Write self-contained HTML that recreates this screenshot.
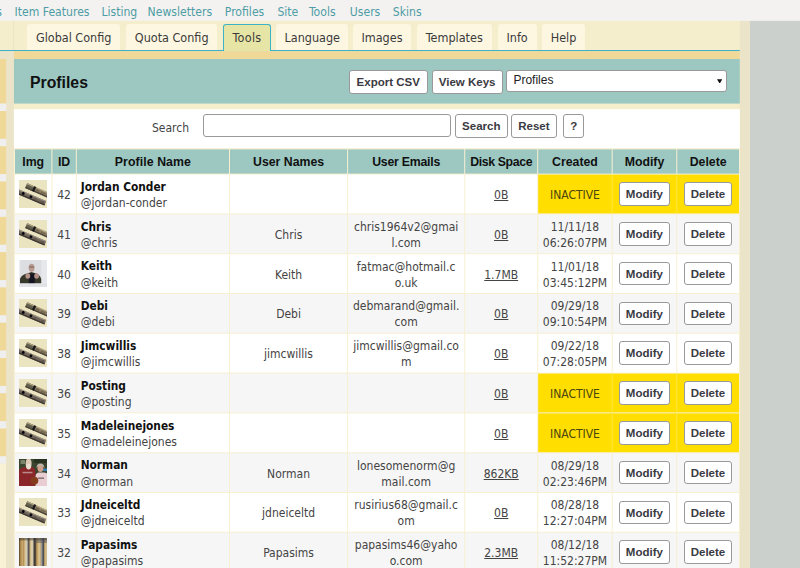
<!DOCTYPE html>
<html lang="en"><head><meta charset="utf-8"><title>Profiles</title>
<style>
html,body{margin:0;padding:0}
body{width:800px;height:568px;overflow:hidden;position:relative;background:#f5eecc;
 font-family:"DejaVu Sans Condensed","Liberation Sans",sans-serif;font-size:12px;color:#444;line-height:16px}
div,span,a{position:absolute;box-sizing:border-box;white-space:nowrap}
svg{position:absolute;display:block;left:0;top:0}
.nav{top:2.5px;font-size:12.1px;color:#4e9ca6;line-height:18px}
.tab{top:24px;height:26px;background:#fdf7e2;border-radius:3px 3px 0 0;font-size:12.5px;line-height:28.4px;text-align:center;color:#3a3a3a}
.tab.on{background:#e6e5a6;border:1px solid #3db1c5;border-bottom:none;height:27.2px;line-height:26.4px}
.title{left:30px;top:72.5px;font-family:"Liberation Sans",sans-serif;font-weight:bold;font-size:15.8px;color:#111;line-height:20px}
.btn{background:#fff;border:1px solid #999;border-radius:3px;font-family:"Liberation Sans",sans-serif;font-weight:bold;font-size:11.5px;color:#3a3a42;text-align:center}
.sel{background:#fff;border:1px solid #999;border-radius:3px;font-family:"Liberation Sans",sans-serif;font-size:12px;color:#222}
.th{font-family:"Liberation Sans",sans-serif;font-weight:bold;font-size:12.3px;color:#111;text-align:center;line-height:26.2px}
.td{display:flex;flex-direction:column;justify-content:center;align-items:center;text-align:center}
.td.l{align-items:flex-start;padding-left:3.9px}
.nm{position:relative;top:.9px;font-weight:bold;font-size:11.8px;color:#111;line-height:16px}
.ln{position:relative;top:1px;line-height:16px}
.lk{position:relative;top:1px;text-decoration:underline;color:#444}
</style></head>
<body>
<svg width="800" height="568" viewBox="0 0 800 568">
<rect x="0" y="0" width="800" height="568" fill="#f5eecc"/>
<rect x="0" y="0" width="800" height="20.9" fill="#f3f2f0"/>
<rect x="13.2" y="21" width="0.9" height="29" fill="#ebe3bf"/>
<rect x="739.8" y="20.9" width="10.2" height="547.1" fill="#ece4c8"/>
<rect x="750" y="20.9" width="50" height="547.1" fill="#cbd0cd"/>
<rect x="0" y="50" width="739.8" height="1.2" fill="#3db1c5"/>
<rect x="0" y="51.2" width="13.9" height="516.8" fill="#ece4c8"/>
<rect x="0" y="59" width="6.1" height="44.6" fill="#f0d899"/>
<rect x="0" y="103.6" width="6.1" height="7.4" fill="#efeff0"/>
<rect x="0" y="111.0" width="6.1" height="27.89" fill="#f0d899"/>
<rect x="0" y="138.89" width="6.1" height="7.4" fill="#efeff0"/>
<rect x="0" y="146.29" width="6.1" height="27.89" fill="#f0d899"/>
<rect x="0" y="174.18" width="6.1" height="7.4" fill="#efeff0"/>
<rect x="0" y="181.58" width="6.1" height="27.89" fill="#f0d899"/>
<rect x="0" y="209.47" width="6.1" height="7.4" fill="#efeff0"/>
<rect x="0" y="216.87" width="6.1" height="27.89" fill="#f0d899"/>
<rect x="0" y="244.76" width="6.1" height="7.4" fill="#efeff0"/>
<rect x="0" y="252.16" width="6.1" height="27.89" fill="#f0d899"/>
<rect x="0" y="280.05" width="6.1" height="7.4" fill="#efeff0"/>
<rect x="0" y="287.45" width="6.1" height="27.89" fill="#f0d899"/>
<rect x="0" y="315.34" width="6.1" height="7.4" fill="#efeff0"/>
<rect x="0" y="322.74" width="6.1" height="27.89" fill="#f0d899"/>
<rect x="0" y="350.63" width="6.1" height="7.4" fill="#efeff0"/>
<rect x="0" y="358.03" width="6.1" height="27.89" fill="#f0d899"/>
<rect x="0" y="385.92" width="6.1" height="7.4" fill="#efeff0"/>
<rect x="0" y="393.32" width="6.1" height="27.89" fill="#f0d899"/>
<rect x="0" y="421.21" width="6.1" height="7.4" fill="#efeff0"/>
<rect x="0" y="428.61" width="6.1" height="27.89" fill="#f0d899"/>
<rect x="0" y="456.3" width="6.1" height="7.5" fill="#efeff0"/>
<rect x="0" y="463.8" width="6.1" height="104.2" fill="#f9f2d4"/>
<rect x="13.9" y="51.2" width="725.9" height="7.8" fill="#f0d899"/>
<rect x="13.9" y="59" width="725.9" height="44.6" fill="#9cc8c1"/>
<rect x="13.9" y="109.2" width="725.9" height="39.1" fill="#fff"/>
<rect x="13.9" y="148.3" width="725.9" height="419.7" fill="#f8f0d2"/>
<rect x="15.0" y="149.4" width="36.4" height="24.2" fill="#9cc8c1"/>
<rect x="52.4" y="149.4" width="23.4" height="24.2" fill="#9cc8c1"/>
<rect x="76.8" y="149.4" width="152.2" height="24.2" fill="#9cc8c1"/>
<rect x="230.0" y="149.4" width="117.1" height="24.2" fill="#9cc8c1"/>
<rect x="348.1" y="149.4" width="116.1" height="24.2" fill="#9cc8c1"/>
<rect x="465.2" y="149.4" width="72.0" height="24.2" fill="#9cc8c1"/>
<rect x="538.2" y="149.4" width="73.5" height="24.2" fill="#9cc8c1"/>
<rect x="612.7" y="149.4" width="63.6" height="24.2" fill="#9cc8c1"/>
<rect x="677.3" y="149.4" width="61.7" height="24.2" fill="#9cc8c1"/>
<rect x="15.0" y="174.6" width="36.4" height="38.8" fill="#fff"/>
<rect x="52.4" y="174.6" width="23.4" height="38.8" fill="#fff"/>
<rect x="76.8" y="174.6" width="152.2" height="38.8" fill="#fff"/>
<rect x="230.0" y="174.6" width="117.1" height="38.8" fill="#fff"/>
<rect x="348.1" y="174.6" width="116.1" height="38.8" fill="#fff"/>
<rect x="465.2" y="174.6" width="72.0" height="38.8" fill="#fff"/>
<rect x="538.2" y="174.6" width="200.8" height="38.8" fill="#ffde00"/>
<rect x="611.75" y="174.6" width="0.9" height="38.8" fill="#ffe646"/>
<rect x="676.35" y="174.6" width="0.9" height="38.8" fill="#ffe646"/>
<rect x="15.0" y="214.4" width="36.4" height="38.8" fill="#f6f6f6"/>
<rect x="52.4" y="214.4" width="23.4" height="38.8" fill="#f6f6f6"/>
<rect x="76.8" y="214.4" width="152.2" height="38.8" fill="#f6f6f6"/>
<rect x="230.0" y="214.4" width="117.1" height="38.8" fill="#f6f6f6"/>
<rect x="348.1" y="214.4" width="116.1" height="38.8" fill="#f6f6f6"/>
<rect x="465.2" y="214.4" width="72.0" height="38.8" fill="#f6f6f6"/>
<rect x="538.2" y="214.4" width="73.5" height="38.8" fill="#f6f6f6"/>
<rect x="612.7" y="214.4" width="63.6" height="38.8" fill="#f6f6f6"/>
<rect x="677.3" y="214.4" width="61.7" height="38.8" fill="#f6f6f6"/>
<rect x="15.0" y="254.2" width="36.4" height="38.8" fill="#fff"/>
<rect x="52.4" y="254.2" width="23.4" height="38.8" fill="#fff"/>
<rect x="76.8" y="254.2" width="152.2" height="38.8" fill="#fff"/>
<rect x="230.0" y="254.2" width="117.1" height="38.8" fill="#fff"/>
<rect x="348.1" y="254.2" width="116.1" height="38.8" fill="#fff"/>
<rect x="465.2" y="254.2" width="72.0" height="38.8" fill="#fff"/>
<rect x="538.2" y="254.2" width="73.5" height="38.8" fill="#fff"/>
<rect x="612.7" y="254.2" width="63.6" height="38.8" fill="#fff"/>
<rect x="677.3" y="254.2" width="61.7" height="38.8" fill="#fff"/>
<rect x="15.0" y="294.0" width="36.4" height="38.8" fill="#f6f6f6"/>
<rect x="52.4" y="294.0" width="23.4" height="38.8" fill="#f6f6f6"/>
<rect x="76.8" y="294.0" width="152.2" height="38.8" fill="#f6f6f6"/>
<rect x="230.0" y="294.0" width="117.1" height="38.8" fill="#f6f6f6"/>
<rect x="348.1" y="294.0" width="116.1" height="38.8" fill="#f6f6f6"/>
<rect x="465.2" y="294.0" width="72.0" height="38.8" fill="#f6f6f6"/>
<rect x="538.2" y="294.0" width="73.5" height="38.8" fill="#f6f6f6"/>
<rect x="612.7" y="294.0" width="63.6" height="38.8" fill="#f6f6f6"/>
<rect x="677.3" y="294.0" width="61.7" height="38.8" fill="#f6f6f6"/>
<rect x="15.0" y="333.8" width="36.4" height="38.8" fill="#fff"/>
<rect x="52.4" y="333.8" width="23.4" height="38.8" fill="#fff"/>
<rect x="76.8" y="333.8" width="152.2" height="38.8" fill="#fff"/>
<rect x="230.0" y="333.8" width="117.1" height="38.8" fill="#fff"/>
<rect x="348.1" y="333.8" width="116.1" height="38.8" fill="#fff"/>
<rect x="465.2" y="333.8" width="72.0" height="38.8" fill="#fff"/>
<rect x="538.2" y="333.8" width="73.5" height="38.8" fill="#fff"/>
<rect x="612.7" y="333.8" width="63.6" height="38.8" fill="#fff"/>
<rect x="677.3" y="333.8" width="61.7" height="38.8" fill="#fff"/>
<rect x="15.0" y="373.6" width="36.4" height="38.8" fill="#f6f6f6"/>
<rect x="52.4" y="373.6" width="23.4" height="38.8" fill="#f6f6f6"/>
<rect x="76.8" y="373.6" width="152.2" height="38.8" fill="#f6f6f6"/>
<rect x="230.0" y="373.6" width="117.1" height="38.8" fill="#f6f6f6"/>
<rect x="348.1" y="373.6" width="116.1" height="38.8" fill="#f6f6f6"/>
<rect x="465.2" y="373.6" width="72.0" height="38.8" fill="#f6f6f6"/>
<rect x="538.2" y="373.6" width="200.8" height="38.8" fill="#ffde00"/>
<rect x="611.75" y="373.6" width="0.9" height="38.8" fill="#ffe646"/>
<rect x="676.35" y="373.6" width="0.9" height="38.8" fill="#ffe646"/>
<rect x="15.0" y="413.4" width="36.4" height="38.8" fill="#fff"/>
<rect x="52.4" y="413.4" width="23.4" height="38.8" fill="#fff"/>
<rect x="76.8" y="413.4" width="152.2" height="38.8" fill="#fff"/>
<rect x="230.0" y="413.4" width="117.1" height="38.8" fill="#fff"/>
<rect x="348.1" y="413.4" width="116.1" height="38.8" fill="#fff"/>
<rect x="465.2" y="413.4" width="72.0" height="38.8" fill="#fff"/>
<rect x="538.2" y="413.4" width="200.8" height="38.8" fill="#ffde00"/>
<rect x="611.75" y="413.4" width="0.9" height="38.8" fill="#ffe646"/>
<rect x="676.35" y="413.4" width="0.9" height="38.8" fill="#ffe646"/>
<rect x="15.0" y="453.2" width="36.4" height="38.8" fill="#f6f6f6"/>
<rect x="52.4" y="453.2" width="23.4" height="38.8" fill="#f6f6f6"/>
<rect x="76.8" y="453.2" width="152.2" height="38.8" fill="#f6f6f6"/>
<rect x="230.0" y="453.2" width="117.1" height="38.8" fill="#f6f6f6"/>
<rect x="348.1" y="453.2" width="116.1" height="38.8" fill="#f6f6f6"/>
<rect x="465.2" y="453.2" width="72.0" height="38.8" fill="#f6f6f6"/>
<rect x="538.2" y="453.2" width="73.5" height="38.8" fill="#f6f6f6"/>
<rect x="612.7" y="453.2" width="63.6" height="38.8" fill="#f6f6f6"/>
<rect x="677.3" y="453.2" width="61.7" height="38.8" fill="#f6f6f6"/>
<rect x="15.0" y="493.0" width="36.4" height="38.8" fill="#fff"/>
<rect x="52.4" y="493.0" width="23.4" height="38.8" fill="#fff"/>
<rect x="76.8" y="493.0" width="152.2" height="38.8" fill="#fff"/>
<rect x="230.0" y="493.0" width="117.1" height="38.8" fill="#fff"/>
<rect x="348.1" y="493.0" width="116.1" height="38.8" fill="#fff"/>
<rect x="465.2" y="493.0" width="72.0" height="38.8" fill="#fff"/>
<rect x="538.2" y="493.0" width="73.5" height="38.8" fill="#fff"/>
<rect x="612.7" y="493.0" width="63.6" height="38.8" fill="#fff"/>
<rect x="677.3" y="493.0" width="61.7" height="38.8" fill="#fff"/>
<rect x="15.0" y="532.8" width="36.4" height="38.8" fill="#f6f6f6"/>
<rect x="52.4" y="532.8" width="23.4" height="38.8" fill="#f6f6f6"/>
<rect x="76.8" y="532.8" width="152.2" height="38.8" fill="#f6f6f6"/>
<rect x="230.0" y="532.8" width="117.1" height="38.8" fill="#f6f6f6"/>
<rect x="348.1" y="532.8" width="116.1" height="38.8" fill="#f6f6f6"/>
<rect x="465.2" y="532.8" width="72.0" height="38.8" fill="#f6f6f6"/>
<rect x="538.2" y="532.8" width="73.5" height="38.8" fill="#f6f6f6"/>
<rect x="612.7" y="532.8" width="63.6" height="38.8" fill="#f6f6f6"/>
<rect x="677.3" y="532.8" width="61.7" height="38.8" fill="#f6f6f6"/>
</svg>
<span class="nav" style="left:-3.8px">s</span>
<span class="nav" style="left:14.6px">Item Features</span>
<span class="nav" style="left:101.4px">Listing</span>
<span class="nav" style="left:147.6px">Newsletters</span>
<span class="nav" style="left:224.8px">Profiles</span>
<span class="nav" style="left:277.4px">Site</span>
<span class="nav" style="left:309px">Tools</span>
<span class="nav" style="left:349.8px">Users</span>
<span class="nav" style="left:392.8px">Skins</span>
<div class="tab" style="left:27px;width:93.4px">Global Config</div>
<div class="tab" style="left:126px;width:91.4px">Quota Config</div>
<div class="tab on" style="left:223px;width:48px;letter-spacing:.3px">Tools</div>
<div class="tab" style="left:276.4px;width:71.8px">Language</div>
<div class="tab" style="left:353px;width:58px">Images</div>
<div class="tab" style="left:416.6px;width:75.4px">Templates</div>
<div class="tab" style="left:497.6px;width:39.0px">Info</div>
<div class="tab" style="left:542px;width:43px">Help</div>
<span class="title">Profiles</span>
<div class="btn" style="left:349px;top:70px;width:78.5px;height:24.3px;line-height:22.6px">Export CSV</div>
<div class="btn" style="left:431.5px;top:70px;width:71.2px;height:24.3px;line-height:22.6px">View Keys</div>
<div class="sel" style="left:506.4px;top:70px;width:220.8px;height:21.8px;line-height:19.6px;padding-left:6px">Profiles<svg style="left:209.6px;top:7.6px" width="5.4" height="4.8" viewBox="0 0 6 5"><path d="M0 0h6L3 5z" fill="#111"/></svg></div>
<span style="left:152px;top:119.8px;line-height:16px">Search</span>
<div class="sel" style="left:203px;top:114px;width:248.2px;height:22.8px"></div>
<div class="btn" style="left:455px;top:114px;width:52.5px;height:23.5px;line-height:22px">Search</div>
<div class="btn" style="left:511.2px;top:114px;width:45.5px;height:23.5px;line-height:22px">Reset</div>
<div class="btn" style="left:563.2px;top:114px;width:21px;height:23.5px;line-height:22px">?</div>
<div class="th" style="left:15.0px;top:149.4px;width:36.4px;height:24.2px">Img</div>
<div class="th" style="left:52.4px;top:149.4px;width:23.4px;height:24.2px">ID</div>
<div class="th" style="left:76.8px;top:149.4px;width:152.2px;height:24.2px;letter-spacing:0.08px">Profile Name</div>
<div class="th" style="left:230.0px;top:149.4px;width:117.1px;height:24.2px">User Names</div>
<div class="th" style="left:348.1px;top:149.4px;width:116.1px;height:24.2px;letter-spacing:-0.23px">User Emails</div>
<div class="th" style="left:465.2px;top:149.4px;width:72.0px;height:24.2px;letter-spacing:-0.35px">Disk Space</div>
<div class="th" style="left:538.2px;top:149.4px;width:73.5px;height:24.2px">Created</div>
<div class="th" style="left:612.7px;top:149.4px;width:63.6px;height:24.2px">Modify</div>
<div class="th" style="left:677.3px;top:149.4px;width:61.7px;height:24.2px">Delete</div>
<div style="left:19px;top:180px;width:28px;height:28px"><svg width="28" height="28" viewBox="0 0 28 28"><rect width="28" height="28" fill="#ebe4c0"/><g transform="rotate(23.8 28 14.75)"><rect x="5.3" y="12.25" width="25" height="5" fill="#8b7d63"/><rect x="5.3" y="12.25" width="7.6" height="5" fill="#63624e"/><rect x="5.3" y="12.25" width="25" height="1" fill="#b9ab88"/><rect x="5.3" y="15.9" width="25" height="1.35" fill="#4a4439"/><rect x="12.7" y="12.1" width="2.3" height="5.2" fill="#15151c"/><rect x="16" y="13.8" width="3.4" height="1.6" fill="#6d604a"/><rect x="21.5" y="14" width="4.5" height="1.5" fill="#75684f"/></g><g transform="rotate(23 0 12.15)"><rect x="-3" y="9.75" width="31.6" height="4.8" fill="#70665a"/><rect x="-3" y="9.75" width="31.6" height="1" fill="#9d9282"/><rect x="-3" y="13.2" width="31.6" height="1.35" fill="#3c3731"/><circle cx="4.4" cy="11.7" r="1.45" fill="#08080e"/><circle cx="12.8" cy="11.7" r="1.45" fill="#08080e"/><rect x="16.5" y="11" width="2" height="2" fill="#5d564c"/><rect x="20.5" y="11.2" width="2" height="1.8" fill="#6a6256"/><rect x="24.5" y="11" width="2.4" height="2" fill="#5d564c"/></g></svg></div>
<div class="td " style="left:52.4px;top:174.6px;width:23.4px;height:38.8px"><span class="ln">42</span></div>
<div class="td l" style="left:76.8px;top:174.6px;width:152.2px;height:38.8px"><span class="nm">Jordan Conder</span><span class="ln">@jordan-conder</span></div>
<div class="td " style="left:465.2px;top:174.6px;width:72.0px;height:38.8px"><a class="lk">0B</a></div>
<div class="td " style="left:538.2px;top:174.6px;width:73.5px;height:38.8px"><span class="ln" style="color:#4b4510">INACTIVE</span></div>
<div class="btn" style="left:618.8px;top:182.2px;width:51.2px;height:23.6px;line-height:22px">Modify</div>
<div class="btn" style="left:683.7px;top:182.2px;width:48.6px;height:23.6px;line-height:22px">Delete</div>
<div style="left:19px;top:220px;width:28px;height:28px"><svg width="28" height="28" viewBox="0 0 28 28"><rect width="28" height="28" fill="#ebe4c0"/><g transform="rotate(23.8 28 14.75)"><rect x="5.3" y="12.25" width="25" height="5" fill="#8b7d63"/><rect x="5.3" y="12.25" width="7.6" height="5" fill="#63624e"/><rect x="5.3" y="12.25" width="25" height="1" fill="#b9ab88"/><rect x="5.3" y="15.9" width="25" height="1.35" fill="#4a4439"/><rect x="12.7" y="12.1" width="2.3" height="5.2" fill="#15151c"/><rect x="16" y="13.8" width="3.4" height="1.6" fill="#6d604a"/><rect x="21.5" y="14" width="4.5" height="1.5" fill="#75684f"/></g><g transform="rotate(23 0 12.15)"><rect x="-3" y="9.75" width="31.6" height="4.8" fill="#70665a"/><rect x="-3" y="9.75" width="31.6" height="1" fill="#9d9282"/><rect x="-3" y="13.2" width="31.6" height="1.35" fill="#3c3731"/><circle cx="4.4" cy="11.7" r="1.45" fill="#08080e"/><circle cx="12.8" cy="11.7" r="1.45" fill="#08080e"/><rect x="16.5" y="11" width="2" height="2" fill="#5d564c"/><rect x="20.5" y="11.2" width="2" height="1.8" fill="#6a6256"/><rect x="24.5" y="11" width="2.4" height="2" fill="#5d564c"/></g></svg></div>
<div class="td " style="left:52.4px;top:214.4px;width:23.4px;height:38.8px"><span class="ln">41</span></div>
<div class="td l" style="left:76.8px;top:214.4px;width:152.2px;height:38.8px"><span class="nm">Chris</span><span class="ln">@chris</span></div>
<div class="td " style="left:230.0px;top:214.4px;width:117.1px;height:38.8px"><span class="ln">Chris</span></div>
<div class="td " style="left:348.1px;top:214.4px;width:116.1px;height:38.8px"><span class="ln">chris1964v2@gmai</span><span class="ln">l.com</span></div>
<div class="td " style="left:465.2px;top:214.4px;width:72.0px;height:38.8px"><a class="lk">0B</a></div>
<div class="td " style="left:538.2px;top:214.4px;width:73.5px;height:38.8px"><span class="ln">11/11/18</span><span class="ln">06:26:07PM</span></div>
<div class="btn" style="left:618.8px;top:222.0px;width:51.2px;height:23.6px;line-height:22px">Modify</div>
<div class="btn" style="left:683.7px;top:222.0px;width:48.6px;height:23.6px;line-height:22px">Delete</div>
<div style="left:19px;top:260px;width:28px;height:27px"><svg width="28" height="27" viewBox="0 0 28 27"><defs><filter id="bm" x="0" y="0" width="1" height="1"><feGaussianBlur stdDeviation=".55"/></filter></defs><rect width="28" height="27" fill="#dfe1e4"/><g filter="url(#bm)"><rect x="-2" y="-2" width="32" height="31" fill="#dcdee1"/><rect x="22.4" y="-2" width="8" height="31" fill="#e6e8eb"/><rect x="-2" y="-2" width="3.2" height="31" fill="#eceef0"/><ellipse cx="12.6" cy="7.8" rx="3" ry="4.1" fill="#bb9c90"/><rect x="10.4" y="6.5" width="4.4" height="1" fill="#6f5f5c"/><path d="M1 23.4V19Q2.5 14.5 8 13.4L12.5 12 17 13.4Q21 14.5 22.2 19v4.4z" fill="#39392c"/><path d="M9.8 13.4h6v10h-6z" fill="#191920"/><ellipse cx="8.8" cy="16" rx="2.4" ry="2.7" fill="#b5928a"/><ellipse cx="17.6" cy="16" rx="2.4" ry="2.7" fill="#b5928a"/><rect x="-2" y="23.4" width="32" height="6" fill="#e1e3e7"/></g></svg></div>
<div class="td " style="left:52.4px;top:254.2px;width:23.4px;height:38.8px"><span class="ln">40</span></div>
<div class="td l" style="left:76.8px;top:254.2px;width:152.2px;height:38.8px"><span class="nm">Keith</span><span class="ln">@keith</span></div>
<div class="td " style="left:230.0px;top:254.2px;width:117.1px;height:38.8px"><span class="ln">Keith</span></div>
<div class="td " style="left:348.1px;top:254.2px;width:116.1px;height:38.8px"><span class="ln">fatmac@hotmail.c</span><span class="ln">o.uk</span></div>
<div class="td " style="left:465.2px;top:254.2px;width:72.0px;height:38.8px"><a class="lk">1.7MB</a></div>
<div class="td " style="left:538.2px;top:254.2px;width:73.5px;height:38.8px"><span class="ln">11/01/18</span><span class="ln">03:45:12PM</span></div>
<div class="btn" style="left:618.8px;top:261.8px;width:51.2px;height:23.6px;line-height:22px">Modify</div>
<div class="btn" style="left:683.7px;top:261.8px;width:48.6px;height:23.6px;line-height:22px">Delete</div>
<div style="left:19px;top:299px;width:28px;height:28px"><svg width="28" height="28" viewBox="0 0 28 28"><rect width="28" height="28" fill="#ebe4c0"/><g transform="rotate(23.8 28 14.75)"><rect x="5.3" y="12.25" width="25" height="5" fill="#8b7d63"/><rect x="5.3" y="12.25" width="7.6" height="5" fill="#63624e"/><rect x="5.3" y="12.25" width="25" height="1" fill="#b9ab88"/><rect x="5.3" y="15.9" width="25" height="1.35" fill="#4a4439"/><rect x="12.7" y="12.1" width="2.3" height="5.2" fill="#15151c"/><rect x="16" y="13.8" width="3.4" height="1.6" fill="#6d604a"/><rect x="21.5" y="14" width="4.5" height="1.5" fill="#75684f"/></g><g transform="rotate(23 0 12.15)"><rect x="-3" y="9.75" width="31.6" height="4.8" fill="#70665a"/><rect x="-3" y="9.75" width="31.6" height="1" fill="#9d9282"/><rect x="-3" y="13.2" width="31.6" height="1.35" fill="#3c3731"/><circle cx="4.4" cy="11.7" r="1.45" fill="#08080e"/><circle cx="12.8" cy="11.7" r="1.45" fill="#08080e"/><rect x="16.5" y="11" width="2" height="2" fill="#5d564c"/><rect x="20.5" y="11.2" width="2" height="1.8" fill="#6a6256"/><rect x="24.5" y="11" width="2.4" height="2" fill="#5d564c"/></g></svg></div>
<div class="td " style="left:52.4px;top:294.0px;width:23.4px;height:38.8px"><span class="ln">39</span></div>
<div class="td l" style="left:76.8px;top:294.0px;width:152.2px;height:38.8px"><span class="nm">Debi</span><span class="ln">@debi</span></div>
<div class="td " style="left:230.0px;top:294.0px;width:117.1px;height:38.8px"><span class="ln">Debi</span></div>
<div class="td " style="left:348.1px;top:294.0px;width:116.1px;height:38.8px"><span class="ln">debmarand@gmail.</span><span class="ln">com</span></div>
<div class="td " style="left:465.2px;top:294.0px;width:72.0px;height:38.8px"><a class="lk">0B</a></div>
<div class="td " style="left:538.2px;top:294.0px;width:73.5px;height:38.8px"><span class="ln">09/29/18</span><span class="ln">09:10:54PM</span></div>
<div class="btn" style="left:618.8px;top:301.6px;width:51.2px;height:23.6px;line-height:22px">Modify</div>
<div class="btn" style="left:683.7px;top:301.6px;width:48.6px;height:23.6px;line-height:22px">Delete</div>
<div style="left:19px;top:339px;width:28px;height:28px"><svg width="28" height="28" viewBox="0 0 28 28"><rect width="28" height="28" fill="#ebe4c0"/><g transform="rotate(23.8 28 14.75)"><rect x="5.3" y="12.25" width="25" height="5" fill="#8b7d63"/><rect x="5.3" y="12.25" width="7.6" height="5" fill="#63624e"/><rect x="5.3" y="12.25" width="25" height="1" fill="#b9ab88"/><rect x="5.3" y="15.9" width="25" height="1.35" fill="#4a4439"/><rect x="12.7" y="12.1" width="2.3" height="5.2" fill="#15151c"/><rect x="16" y="13.8" width="3.4" height="1.6" fill="#6d604a"/><rect x="21.5" y="14" width="4.5" height="1.5" fill="#75684f"/></g><g transform="rotate(23 0 12.15)"><rect x="-3" y="9.75" width="31.6" height="4.8" fill="#70665a"/><rect x="-3" y="9.75" width="31.6" height="1" fill="#9d9282"/><rect x="-3" y="13.2" width="31.6" height="1.35" fill="#3c3731"/><circle cx="4.4" cy="11.7" r="1.45" fill="#08080e"/><circle cx="12.8" cy="11.7" r="1.45" fill="#08080e"/><rect x="16.5" y="11" width="2" height="2" fill="#5d564c"/><rect x="20.5" y="11.2" width="2" height="1.8" fill="#6a6256"/><rect x="24.5" y="11" width="2.4" height="2" fill="#5d564c"/></g></svg></div>
<div class="td " style="left:52.4px;top:333.8px;width:23.4px;height:38.8px"><span class="ln">38</span></div>
<div class="td l" style="left:76.8px;top:333.8px;width:152.2px;height:38.8px"><span class="nm">Jimcwillis</span><span class="ln">@jimcwillis</span></div>
<div class="td " style="left:230.0px;top:333.8px;width:117.1px;height:38.8px"><span class="ln">jimcwillis</span></div>
<div class="td " style="left:348.1px;top:333.8px;width:116.1px;height:38.8px"><span class="ln">jimcwillis@gmail.co</span><span class="ln">m</span></div>
<div class="td " style="left:465.2px;top:333.8px;width:72.0px;height:38.8px"><a class="lk">0B</a></div>
<div class="td " style="left:538.2px;top:333.8px;width:73.5px;height:38.8px"><span class="ln">09/22/18</span><span class="ln">07:28:05PM</span></div>
<div class="btn" style="left:618.8px;top:341.4px;width:51.2px;height:23.6px;line-height:22px">Modify</div>
<div class="btn" style="left:683.7px;top:341.4px;width:48.6px;height:23.6px;line-height:22px">Delete</div>
<div style="left:19px;top:379px;width:28px;height:28px"><svg width="28" height="28" viewBox="0 0 28 28"><rect width="28" height="28" fill="#ebe4c0"/><g transform="rotate(23.8 28 14.75)"><rect x="5.3" y="12.25" width="25" height="5" fill="#8b7d63"/><rect x="5.3" y="12.25" width="7.6" height="5" fill="#63624e"/><rect x="5.3" y="12.25" width="25" height="1" fill="#b9ab88"/><rect x="5.3" y="15.9" width="25" height="1.35" fill="#4a4439"/><rect x="12.7" y="12.1" width="2.3" height="5.2" fill="#15151c"/><rect x="16" y="13.8" width="3.4" height="1.6" fill="#6d604a"/><rect x="21.5" y="14" width="4.5" height="1.5" fill="#75684f"/></g><g transform="rotate(23 0 12.15)"><rect x="-3" y="9.75" width="31.6" height="4.8" fill="#70665a"/><rect x="-3" y="9.75" width="31.6" height="1" fill="#9d9282"/><rect x="-3" y="13.2" width="31.6" height="1.35" fill="#3c3731"/><circle cx="4.4" cy="11.7" r="1.45" fill="#08080e"/><circle cx="12.8" cy="11.7" r="1.45" fill="#08080e"/><rect x="16.5" y="11" width="2" height="2" fill="#5d564c"/><rect x="20.5" y="11.2" width="2" height="1.8" fill="#6a6256"/><rect x="24.5" y="11" width="2.4" height="2" fill="#5d564c"/></g></svg></div>
<div class="td " style="left:52.4px;top:373.6px;width:23.4px;height:38.8px"><span class="ln">36</span></div>
<div class="td l" style="left:76.8px;top:373.6px;width:152.2px;height:38.8px"><span class="nm">Posting</span><span class="ln">@posting</span></div>
<div class="td " style="left:465.2px;top:373.6px;width:72.0px;height:38.8px"><a class="lk">0B</a></div>
<div class="td " style="left:538.2px;top:373.6px;width:73.5px;height:38.8px"><span class="ln" style="color:#4b4510">INACTIVE</span></div>
<div class="btn" style="left:618.8px;top:381.2px;width:51.2px;height:23.6px;line-height:22px">Modify</div>
<div class="btn" style="left:683.7px;top:381.2px;width:48.6px;height:23.6px;line-height:22px">Delete</div>
<div style="left:19px;top:419px;width:28px;height:28px"><svg width="28" height="28" viewBox="0 0 28 28"><rect width="28" height="28" fill="#ebe4c0"/><g transform="rotate(23.8 28 14.75)"><rect x="5.3" y="12.25" width="25" height="5" fill="#8b7d63"/><rect x="5.3" y="12.25" width="7.6" height="5" fill="#63624e"/><rect x="5.3" y="12.25" width="25" height="1" fill="#b9ab88"/><rect x="5.3" y="15.9" width="25" height="1.35" fill="#4a4439"/><rect x="12.7" y="12.1" width="2.3" height="5.2" fill="#15151c"/><rect x="16" y="13.8" width="3.4" height="1.6" fill="#6d604a"/><rect x="21.5" y="14" width="4.5" height="1.5" fill="#75684f"/></g><g transform="rotate(23 0 12.15)"><rect x="-3" y="9.75" width="31.6" height="4.8" fill="#70665a"/><rect x="-3" y="9.75" width="31.6" height="1" fill="#9d9282"/><rect x="-3" y="13.2" width="31.6" height="1.35" fill="#3c3731"/><circle cx="4.4" cy="11.7" r="1.45" fill="#08080e"/><circle cx="12.8" cy="11.7" r="1.45" fill="#08080e"/><rect x="16.5" y="11" width="2" height="2" fill="#5d564c"/><rect x="20.5" y="11.2" width="2" height="1.8" fill="#6a6256"/><rect x="24.5" y="11" width="2.4" height="2" fill="#5d564c"/></g></svg></div>
<div class="td " style="left:52.4px;top:413.4px;width:23.4px;height:38.8px"><span class="ln">35</span></div>
<div class="td l" style="left:76.8px;top:413.4px;width:152.2px;height:38.8px"><span class="nm">Madeleinejones</span><span class="ln">@madeleinejones</span></div>
<div class="td " style="left:465.2px;top:413.4px;width:72.0px;height:38.8px"><a class="lk">0B</a></div>
<div class="td " style="left:538.2px;top:413.4px;width:73.5px;height:38.8px"><span class="ln" style="color:#4b4510">INACTIVE</span></div>
<div class="btn" style="left:618.8px;top:421.0px;width:51.2px;height:23.6px;line-height:22px">Modify</div>
<div class="btn" style="left:683.7px;top:421.0px;width:48.6px;height:23.6px;line-height:22px">Delete</div>
<div style="left:19px;top:459px;width:28px;height:27px"><svg width="28" height="27" viewBox="0 0 28 27"><defs><filter id="bc" x="0" y="0" width="1" height="1"><feGaussianBlur stdDeviation=".55"/></filter></defs><rect width="28" height="27" fill="#3a442e"/><g filter="url(#bc)"><rect x="-2" y="-2" width="32" height="31" fill="#3a442e"/><rect x="1.5" y="1" width="4.5" height="4" fill="#7a846a"/><rect x="23.5" y="9.5" width="6" height="2.6" fill="#3b7fae"/><rect x="15" y="-2" width="15" height="6" fill="#2a3222"/><path d="M-2 29V13Q1.5 8.5 6 8h7Q16.5 9 16.5 14v15z" fill="#8a272b"/><rect x="3.5" y="12.8" width="10" height="1.5" fill="#b98a8a"/><ellipse cx="9.6" cy="4.4" rx="3" ry="4.8" fill="#dccab6"/><ellipse cx="9.6" cy="7.6" rx="2.5" ry="2.8" fill="#e8dfd2"/><path d="M16.5 29V17Q17 13.6 20 13.4h5Q30 14 30 18v11z" fill="#e8cdd3"/><ellipse cx="21.4" cy="9.2" rx="2.9" ry="3.7" fill="#cfa18b"/><path d="M17.6 9.2Q17.4 4.4 21.4 4.4T25.4 9.2Q24.4 6.6 21.4 6.6T17.6 9.2z" fill="#bcb5ae"/><circle cx="15.4" cy="21.6" r="3.9" fill="#843e1e"/><rect x="19" y="18.4" width="6" height="1.6" fill="#8d7a78"/></g></svg></div>
<div class="td " style="left:52.4px;top:453.2px;width:23.4px;height:38.8px"><span class="ln">34</span></div>
<div class="td l" style="left:76.8px;top:453.2px;width:152.2px;height:38.8px"><span class="nm">Norman</span><span class="ln">@norman</span></div>
<div class="td " style="left:230.0px;top:453.2px;width:117.1px;height:38.8px"><span class="ln">Norman</span></div>
<div class="td " style="left:348.1px;top:453.2px;width:116.1px;height:38.8px"><span class="ln">lonesomenorm@g</span><span class="ln">mail.com</span></div>
<div class="td " style="left:465.2px;top:453.2px;width:72.0px;height:38.8px"><a class="lk">862KB</a></div>
<div class="td " style="left:538.2px;top:453.2px;width:73.5px;height:38.8px"><span class="ln">08/29/18</span><span class="ln">02:23:46PM</span></div>
<div class="btn" style="left:618.8px;top:460.8px;width:51.2px;height:23.6px;line-height:22px">Modify</div>
<div class="btn" style="left:683.7px;top:460.8px;width:48.6px;height:23.6px;line-height:22px">Delete</div>
<div style="left:19px;top:498px;width:28px;height:28px"><svg width="28" height="28" viewBox="0 0 28 28"><rect width="28" height="28" fill="#ebe4c0"/><g transform="rotate(23.8 28 14.75)"><rect x="5.3" y="12.25" width="25" height="5" fill="#8b7d63"/><rect x="5.3" y="12.25" width="7.6" height="5" fill="#63624e"/><rect x="5.3" y="12.25" width="25" height="1" fill="#b9ab88"/><rect x="5.3" y="15.9" width="25" height="1.35" fill="#4a4439"/><rect x="12.7" y="12.1" width="2.3" height="5.2" fill="#15151c"/><rect x="16" y="13.8" width="3.4" height="1.6" fill="#6d604a"/><rect x="21.5" y="14" width="4.5" height="1.5" fill="#75684f"/></g><g transform="rotate(23 0 12.15)"><rect x="-3" y="9.75" width="31.6" height="4.8" fill="#70665a"/><rect x="-3" y="9.75" width="31.6" height="1" fill="#9d9282"/><rect x="-3" y="13.2" width="31.6" height="1.35" fill="#3c3731"/><circle cx="4.4" cy="11.7" r="1.45" fill="#08080e"/><circle cx="12.8" cy="11.7" r="1.45" fill="#08080e"/><rect x="16.5" y="11" width="2" height="2" fill="#5d564c"/><rect x="20.5" y="11.2" width="2" height="1.8" fill="#6a6256"/><rect x="24.5" y="11" width="2.4" height="2" fill="#5d564c"/></g></svg></div>
<div class="td " style="left:52.4px;top:493.0px;width:23.4px;height:38.8px"><span class="ln">33</span></div>
<div class="td l" style="left:76.8px;top:493.0px;width:152.2px;height:38.8px"><span class="nm">Jdneiceltd</span><span class="ln">@jdneiceltd</span></div>
<div class="td " style="left:230.0px;top:493.0px;width:117.1px;height:38.8px"><span class="ln">jdneiceltd</span></div>
<div class="td " style="left:348.1px;top:493.0px;width:116.1px;height:38.8px"><span class="ln">rusirius68@gmail.c</span><span class="ln">om</span></div>
<div class="td " style="left:465.2px;top:493.0px;width:72.0px;height:38.8px"><a class="lk">0B</a></div>
<div class="td " style="left:538.2px;top:493.0px;width:73.5px;height:38.8px"><span class="ln">08/28/18</span><span class="ln">12:27:04PM</span></div>
<div class="btn" style="left:618.8px;top:500.6px;width:51.2px;height:23.6px;line-height:22px">Modify</div>
<div class="btn" style="left:683.7px;top:500.6px;width:48.6px;height:23.6px;line-height:22px">Delete</div>
<div style="left:19px;top:538px;width:28px;height:28px"><svg width="28" height="28" viewBox="0 0 28 28"><defs><filter id="bw" x="0" y="0" width="1" height="1"><feGaussianBlur stdDeviation=".5 .2"/></filter></defs><rect width="28" height="28" fill="#bfa572"/><g filter="url(#bw)"><rect x="0" y="-2" width="1.6" height="32" fill="#6e5630"/><rect x="1.2" y="-2" width="1.6" height="32" fill="#b08c50"/><rect x="2.6" y="-2" width="1.6" height="32" fill="#c8a86c"/><rect x="4" y="-2" width="1.6" height="32" fill="#b8935a"/><rect x="5.2" y="-2" width="1.6" height="32" fill="#d0b681"/><rect x="6.4" y="-2" width="1.6" height="32" fill="#ddd2b6"/><rect x="7.6" y="-2" width="1.6" height="32" fill="#c2bbb0"/><rect x="8.6" y="-2" width="1.6" height="32" fill="#77736f"/><rect x="9.6" y="-2" width="1.6" height="32" fill="#35332f"/><rect x="10.4" y="-2" width="1.6" height="32" fill="#c6b07e"/><rect x="11.6" y="-2" width="1.6" height="32" fill="#d9c9a0"/><rect x="12.8" y="-2" width="1.6" height="32" fill="#e2d5b4"/><rect x="13.8" y="-2" width="1.6" height="32" fill="#b2a690"/><rect x="14.6" y="-2" width="1.6" height="32" fill="#4b4948"/><rect x="15.6" y="-2" width="1.6" height="32" fill="#2d2c2e"/><rect x="16.6" y="-2" width="1.6" height="32" fill="#947848"/><rect x="17.6" y="-2" width="1.6" height="32" fill="#c09e62"/><rect x="18.8" y="-2" width="1.6" height="32" fill="#d3ba84"/><rect x="20" y="-2" width="1.6" height="32" fill="#d8c290"/><rect x="21.2" y="-2" width="1.6" height="32" fill="#bea87a"/><rect x="22.2" y="-2" width="1.6" height="32" fill="#98979c"/><rect x="23.2" y="-2" width="1.6" height="32" fill="#626068"/><rect x="24.2" y="-2" width="1.6" height="32" fill="#47464c"/><rect x="25" y="-2" width="1.6" height="32" fill="#b09868"/><rect x="26" y="-2" width="1.6" height="32" fill="#ccb484"/><rect x="27" y="-2" width="1.6" height="32" fill="#d2bc8c"/><rect x="-2" y="-2" width="32" height="4.4" fill="#2e2a28" opacity=".45"/><rect x="16" y="-2" width="14" height="7" fill="#50505c" opacity=".45"/></g></svg></div>
<div class="td " style="left:52.4px;top:532.8px;width:23.4px;height:38.8px"><span class="ln">32</span></div>
<div class="td l" style="left:76.8px;top:532.8px;width:152.2px;height:38.8px"><span class="nm">Papasims</span><span class="ln">@papasims</span></div>
<div class="td " style="left:230.0px;top:532.8px;width:117.1px;height:38.8px"><span class="ln">Papasims</span></div>
<div class="td " style="left:348.1px;top:532.8px;width:116.1px;height:38.8px"><span class="ln">papasims46@yaho</span><span class="ln">o.com</span></div>
<div class="td " style="left:465.2px;top:532.8px;width:72.0px;height:38.8px"><a class="lk">2.3MB</a></div>
<div class="td " style="left:538.2px;top:532.8px;width:73.5px;height:38.8px"><span class="ln">08/12/18</span><span class="ln">11:52:27PM</span></div>
<div class="btn" style="left:618.8px;top:540.4px;width:51.2px;height:23.6px;line-height:22px">Modify</div>
<div class="btn" style="left:683.7px;top:540.4px;width:48.6px;height:23.6px;line-height:22px">Delete</div>
</body></html>
